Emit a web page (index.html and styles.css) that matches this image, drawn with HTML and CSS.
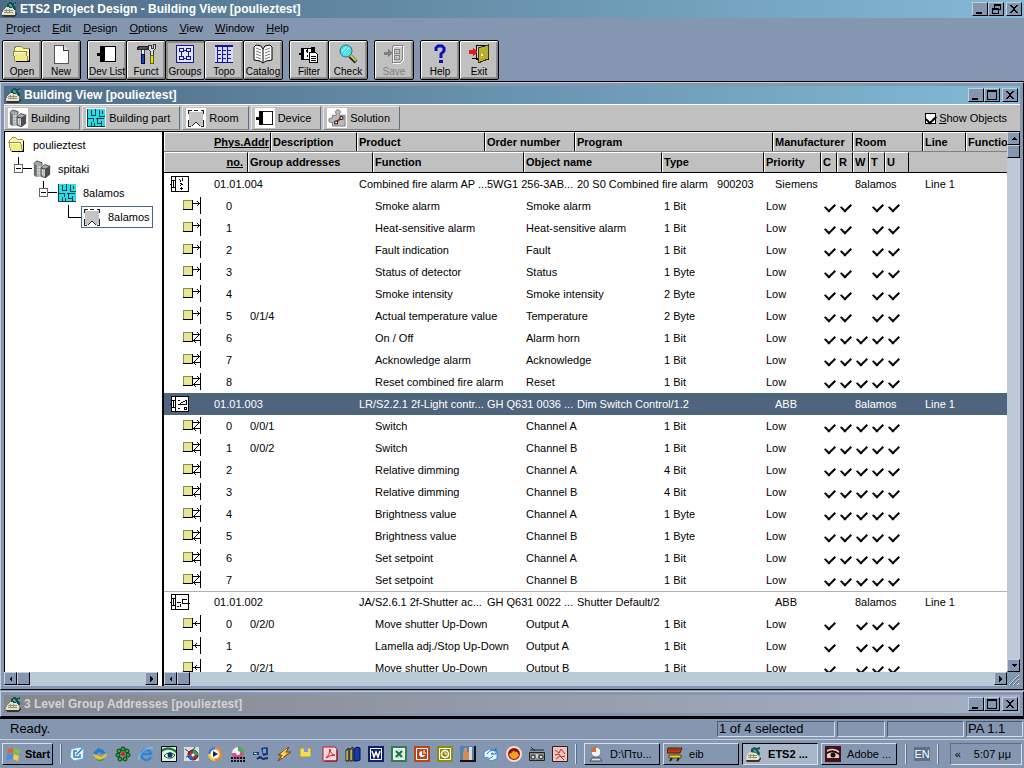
FILE: index.html
```html
<!DOCTYPE html>
<html lang="en">
<head>
    <meta charset="UTF-8">
    <meta name="viewport" content="width=device-width, initial-scale=1.0">
    <title>ETS2 Project Design - Building View [poulieztest]</title>
    <link rel="stylesheet" href="styles.css">
</head>
<body>
    <!-- Icon set -->
    <svg class="sprite" aria-hidden="true">
        <symbol id="i-app" viewBox="0 0 16 16">
            <path d="M5 3l3-2 3 1 3-1v2l-2 1 2 3-1 4-4-3-4 1z" fill="#164f57"/>
            <path d="M7 3l3 1 1 3-3-1zM12 3h2v1h-2z" fill="#43a19a"/>
            <path d="M1 9l3-3 6 1 3 3v4l-2 1H1l-1-2z" fill="#e8e2c4"/>
            <path d="M2 9.500h9M2 11.500h9M4.500 8v4M7.500 8v4" stroke="#8f907f" fill="none"/>
            <path d="M0 14h12l3-3v2l-2 3H1z" fill="#37352a"/>
        </symbol>
        <symbol id="i-folder" viewBox="0 0 20 18">
            <path d="M2 4l2-3h5l2 2h6v12H4z" fill="#fbf7a0" stroke="#8b8b45"/>
            <path d="M1 6h13l2 10H3z" fill="#f0ec88" stroke="#8b8b45"/>
            <path d="M17 4h1v13H4v-1h13z" fill="#000"/>
            <path d="M2 7h11" stroke="#fff"/>
        </symbol>
        <symbol id="i-page" viewBox="0 0 20 20">
            <path d="M3 1h9l5 5v13H3z" fill="#fff" stroke="#555"/>
            <path d="M12 1v5h5" fill="#ddd" stroke="#333"/>
        </symbol>
        <symbol id="i-device" viewBox="0 0 20 20">
            <path d="M3.500 2.500h15v15h-15z" fill="#fff" stroke="#000"/>
            <path d="M3 2h5v16H3zM0 9h3v3H0z" fill="#000"/>
        </symbol>
        <symbol id="i-tools" viewBox="0 0 20 20">
            <path d="M5 5h3v6H5z" fill="#e8e8e8" stroke="#444"/>
            <path d="M1 4l3-2h7v3H4L2 6z" fill="#555" stroke="#222"/>
            <path d="M12 1v4l2 2v4h3V7l2-2V0l-2 1v3h-2V1z" fill="#ddd" stroke="#333"/>
            <path d="M5 10h3v9H5z" fill="#1048c0" stroke="#003"/>
            <path d="M14 11h3v8h-3z" fill="#f0d820" stroke="#660"/>
        </symbol>
        <symbol id="i-groups" viewBox="0 0 20 20">
            <path d="M1.500 1.500h17v17h-17z" fill="#e4e6fa" stroke="#1414a0"/>
            <path d="M4.500 4.500h4v3h-4zM11.500 4.500h4v3h-4zM4.500 12.500h4v3h-4zM11.500 12.500h4v3h-4zM8 6.500h3M8 14.500h3M6.500 8v4M13.500 8v4" fill="none" stroke="#1414a0"/>
        </symbol>
        <symbol id="i-topo" viewBox="0 0 20 20">
            <path d="M1 1h18v18H1z" fill="#d8dbf6"/>
            <path d="M1 1h18v2H1z" fill="#1414a0"/>
            <path d="M3.500 2v16M8.500 2v16M13.500 2v16M1 18.500h18M4 6.500h3M4 10.500h3M4 14.500h3M9 6.500h3M9 10.500h3M9 14.500h3M14 6.500h3M14 10.500h3M14 14.500h3" stroke="#1414a0"/>
        </symbol>
        <symbol id="i-book" viewBox="0 0 20 20">
            <path d="M1 3l2-2 5 1 2 3 2-3 5-1 2 2v13l-6 1-3 2-3-2-6-1z" fill="#fff" stroke="#000"/>
            <path d="M10 5v13" stroke="#000"/>
            <path d="M3 4l5 2M3 7l5 2M3 10l5 2M3 13l5 2M17 4l-5 2M17 7l-5 2M17 10l-5 2M17 13l-5 2" stroke="#777" fill="none"/>
        </symbol>
        <symbol id="i-filter" viewBox="0 0 20 20">
            <path d="M2.500 4.500h12v11h-12z" fill="#fff" stroke="#000"/>
            <path d="M2 4h3v12H2zM0 9h2v2H0zM12 3h4v6h-4zM6 7l3-2v4zM7 12l2-2v4z" fill="#000"/>
            <path d="M10.500 8.500h6l2 2v8h-8z" fill="#fff" stroke="#000"/>
            <path d="M12 12.500h5M12 14.500h5M12 16.500h5" stroke="#000"/>
        </symbol>
        <symbol id="i-check-lens" viewBox="0 0 20 20">
            <path d="M12 12l6 6" stroke="#222" stroke-width="4"/>
            <path d="M12 11l6 6" stroke="#d8cf4a" stroke-width="2"/>
            <circle cx="8" cy="7" r="6" fill="#4de2ec" stroke="#27707a"/>
            <path d="M4 7l4-4M6 9l5-5" stroke="#c8fbff"/>
        </symbol>
        <symbol id="i-save" viewBox="0 0 20 20">
            <path d="M0 8h4V5l4 4-4 5v-3H0z" fill="#808080"/>
            <path d="M9 4l2-2h8v15l-2 2H9z" fill="#c8c8c8" stroke="#fff"/>
            <path d="M8 3l2-2h8v15l-2 2H8zM10 5h5v4h-5zM10 11h5v4h-5zM12 7h1M12 13h1" fill="none" stroke="#808080"/>
        </symbol>
        <symbol id="i-help" viewBox="0 0 20 20">
            <path d="M6 7V4l2-2h4l2 2v3l-3 3v4" fill="none" stroke="#1010b8" stroke-width="3"/>
            <path d="M9 16h4v3H9z" fill="#1010b8"/>
        </symbol>
        <symbol id="i-exit" viewBox="0 0 20 20">
            <path d="M7 1h12v14H7zM3 14h7" fill="#d8d8d8" stroke="#000"/>
            <path d="M9 4l10-3v14L9 19z" fill="#b9ad32" stroke="#3a3608"/>
            <path d="M12 10h2v2h-2z" fill="#fff59a"/>
            <path d="M0 6h4V3l4 5-4 5v-3H0z" fill="#e01820"/>
        </symbol>
        <symbol id="i-building" viewBox="0 0 20 20">
            <path d="M1 4l3-3 6 2v15l-6 1-3-2z" fill="#a4a8a8"/>
            <path d="M1 4l3 2v13l-3-2z" fill="#666b6b"/>
            <path d="M9 9l4-4 6 2v9l-5 4-5-2z" fill="#aaaeae"/>
            <path d="M14 10l5-3v9l-5 4z" fill="#4c5050"/>
            <path d="M1 4l3-3 6 2v3M9 9l4-4 6 2-5 3-5-1v9l5 2v-10" fill="none" stroke="#3c4040"/>
            <path d="M5.500 7v10M7.500 7v10M10.500 11v6M12.500 11v7" stroke="#f0f4f4" stroke-dasharray="2 1"/>
        </symbol>
        <symbol id="i-part" viewBox="0 0 18 18">
            <path d="M0 0h18v18H0z" fill="#28dce8"/>
            <path d="M.5 0v18M0 17.500h18M4.500 1v5h4M8.500 0v6M12.500 1v6h5M15.500 2v3M1 9.500h5v3M4.500 13v4M9 9.500h8M10.500 10v4h4M14.500 12v5M7.500 14v3" fill="none" stroke="#0b3a44"/>
        </symbol>
        <symbol id="i-room" viewBox="0 0 18 18">
            <path d="M2 2l2 1h10l2-1v13l-1 2h-2l-4-4-4 4H3l-1-3z" fill="#c4c4c4"/>
            <path d="M1.500 5V1.500h3M7 1.500h4M14 1.500h2.500V5M16.500 11v6H14M1.500 11v6H4M5 17l4-4 4 4" fill="none" stroke="#222"/>
        </symbol>
        <symbol id="i-puzzle" viewBox="0 0 20 20">
            <path d="M5 7h4V5L8 3l2-2h2l2 2-1 2v2h6v12H5v-4H3l-2-1v-3l2-1h2z" fill="#b8b8b8" stroke="#777"/>
            <path d="M8 15l7-5" stroke="#d01818" stroke-width="2"/>
            <path d="M7.500 13.500h3v3h-3zM13.500 8.500h3v3h-3z" fill="#fff" stroke="#000"/>
        </symbol>
        <symbol id="i-node" viewBox="0 0 25 24">
            <path d="M10.500 0v7M14 11.500h10" stroke="#000"/>
            <path d="M6.500 7.500h8v8h-8z" fill="#fff" stroke="#666"/>
            <path d="M8 11.500h5" stroke="#000"/>
        </symbol>
        <symbol id="i-leaf" viewBox="0 0 25 24"><path d="M10.500 0v12h13" fill="none" stroke="#000"/></symbol>
        <symbol id="i-unit" viewBox="0 0 20 16">
            <path d="M1.500 .5h17v15h-17z" fill="#fff" stroke="#000"/>
            <path d="M5.500 1v14M1 4.500h4M1 11.500h4M3.500 4v8M0 8.500h1" stroke="#000"/>
        </symbol>
        <symbol id="i-fire" viewBox="0 0 20 16">
            <use href="#i-unit"/>
            <path d="M9 3h1v1H9zM10 4h1v2h-1zM12 2h1v3h-1zM10 7h2v1h-2zM11 8h2v1h-2zM10 9h1v1h-1zM11 11h1v3h-1zM10 12h3v1h-3z"/>
        </symbol>
        <symbol id="i-dimmer" viewBox="0 0 20 16">
            <use href="#i-unit"/>
            <path d="M8 8.500h9M10 7.500l6-3v4M8 4.500h2M14.500 11.500h2v2h-2zM8 12.500h2" fill="none" stroke="#000"/>
        </symbol>
        <symbol id="i-shutter" viewBox="0 0 20 16">
            <use href="#i-unit"/>
            <path d="M13 5.500h4M12.500 5v5M12 9.500h8M7 8.500h4M7 12.500h2M10.500 10v3" fill="none" stroke="#000"/>
        </symbol>
        <symbol id="i-box" viewBox="0 0 18 18">
            <path d="M1 4h8v8H1z" fill="#e6e696"/>
            <path d="M.5 13V3.500H10" fill="none" stroke="#8c8c50"/>
            <path d="M0 12.500h9.500V3M17.500 0v17" fill="none" stroke="#000"/>
        </symbol>
        <symbol id="i-out" viewBox="0 0 18 18"><use href="#i-box"/><path d="M10 6.500h7M14 4h1v1h1v1h1v1h-1v1h-1v1h-1V8h1V5h-1z" fill="#000" stroke="none"/><path d="M10 6.500h7" stroke="#000"/></symbol>
        <symbol id="i-in" viewBox="0 0 18 18"><use href="#i-box"/><path d="M10 8.500h7" stroke="#000"/><path d="M13 6h1v1h-1v1h-1V7h1zM12 9h1v1h1v1h-1v-1h-1z"/></symbol>
        <symbol id="i-both" viewBox="0 0 18 18">
            <use href="#i-box"/>
            <path d="M10 5.500h7M10 11.500h7" stroke="#000"/>
            <path d="M14 3h1v1h1v1h-1V4h-1zM15 6h1v1h-1zM14 7h1v1h-1zM13 8h1v1h-1zM12 9h1v1h-1zM11 10h1v1h-1zM11 12h1v1h-1zM12 13h1v1h-1z"/>
        </symbol>
        <symbol id="i-min" viewBox="0 0 12 12"><path d="M2 9h6v2H2z"/></symbol>
        <symbol id="i-max" viewBox="0 0 12 12"><path d="M1 1h10v10H1zM2 3v7h8V3z" fill-rule="evenodd"/></symbol>
        <symbol id="i-restore" viewBox="0 0 12 12"><path d="M4 1h7v6H9v4H2V5h2zM5 3v2h4v1h1V3zM3 7v3h5V7z" fill-rule="evenodd"/></symbol>
        <symbol id="i-close" viewBox="0 0 12 12"><path d="M2 2h2v1h1v1h2V3h1V2h2v1H9v1H8v1H7v2h1v1h1v1h1v1H8V9H7V8H5v1H4v1H2V9h1V8h1V7h1V5H4V4H3V3H2z"/></symbol>
        <symbol id="i-left" viewBox="0 0 12 12"><path d="M7 3v6L4 6z"/></symbol>
        <symbol id="i-right" viewBox="0 0 12 12"><path d="M4 3v6l3-3z"/></symbol>
        <symbol id="i-up" viewBox="0 0 12 12"><path d="M3 7h6L6 4z"/></symbol>
        <symbol id="i-down" viewBox="0 0 12 12"><path d="M3 4h6L6 7z"/></symbol>
    </svg>

    <header class="titlebar">
        <svg class="app-icon"><use href="#i-app"/></svg>
        <h1>ETS2 Project Design - Building View [poulieztest]</h1>
        <div class="win-buttons">
            <button aria-label="Minimize"><svg><use href="#i-min"/></svg></button>
            <button aria-label="Restore"><svg><use href="#i-restore"/></svg></button>
            <button aria-label="Close"><svg><use href="#i-close"/></svg></button>
        </div>
    </header>

    <nav class="menu">
        <a href="#"><u>P</u>roject</a>
        <a href="#"><u>E</u>dit</a>
        <a href="#"><u>D</u>esign</a>
        <a href="#"><u>O</u>ptions</a>
        <a href="#"><u>V</u>iew</a>
        <a href="#"><u>W</u>indow</a>
        <a href="#"><u>H</u>elp</a>
    </nav>

    <div class="toolbar">
        <div class="tool-group">
            <button><svg><use href="#i-folder"/></svg>Open</button>
            <button><svg><use href="#i-page"/></svg>New</button>
        </div>
        <div class="tool-group">
            <button><svg><use href="#i-device"/></svg>Dev List</button>
            <button><svg><use href="#i-tools"/></svg>Funct</button>
            <button class="pressed"><svg><use href="#i-groups"/></svg>Groups</button>
            <button><svg><use href="#i-topo"/></svg>Topo</button>
            <button><svg class="smooth"><use href="#i-book"/></svg>Catalog</button>
        </div>
        <div class="tool-group">
            <button><svg><use href="#i-filter"/></svg>Filter</button>
            <button><svg class="smooth"><use href="#i-check-lens"/></svg>Check</button>
        </div>
        <div class="tool-group">
            <button disabled><svg><use href="#i-save"/></svg>Save</button>
        </div>
        <div class="tool-group">
            <button><svg class="smooth"><use href="#i-help"/></svg>Help</button>
            <button><svg><use href="#i-exit"/></svg>Exit</button>
        </div>
    </div>

    <main class="workspace">
        <section class="window main-window">
            <div class="titlebar">
                <svg class="app-icon"><use href="#i-app"/></svg>
                <h2>Building View [poulieztest]</h2>
                <div class="win-buttons">
                    <button aria-label="Minimize"><svg><use href="#i-min"/></svg></button>
                    <button aria-label="Maximize"><svg><use href="#i-max"/></svg></button>
                    <button aria-label="Close"><svg><use href="#i-close"/></svg></button>
                </div>
            </div>

            <div class="partbar">
                <button><svg class="smooth"><use href="#i-building"/></svg>Building</button>
                <button><svg><use href="#i-part"/></svg>Building part</button>
                <button><svg><use href="#i-room"/></svg>Room</button>
                <button><svg><use href="#i-device"/></svg>Device</button>
                <button><svg class="smooth"><use href="#i-puzzle"/></svg>Solution</button>
                <label class="show-objects"><input type="checkbox" checked><span><u>S</u>how Objects</span></label>
            </div>

            <div class="panes">
                <div class="tree-pane">
                    <ul class="tree">
                        <li><svg class="tree-icon"><use href="#i-folder"/></svg><span>poulieztest</span></li>
                        <li><svg class="branch"><use href="#i-node"/></svg><svg class="tree-icon smooth"><use href="#i-building"/></svg><span>spitaki</span></li>
                        <li class="level-2"><svg class="branch"><use href="#i-node"/></svg><svg class="tree-icon"><use href="#i-part"/></svg><span>8alamos</span></li>
                        <li class="level-3"><svg class="branch"><use href="#i-leaf"/></svg><div class="tree-selected"><svg class="tree-icon"><use href="#i-room"/></svg><span>8alamos</span></div></li>
                    </ul>
                    <div class="hscroll">
                        <button aria-label="Scroll left"><svg><use href="#i-left"/></svg></button>
                        <div class="thumb"></div>
                        <button class="end" aria-label="Scroll right"><svg><use href="#i-right"/></svg></button>
                    </div>
                </div>

                <div class="list-pane">
                    <div class="list-view">
                        <table>
                            <thead>
                                <tr class="device-row">
                                    <th class="phys"><u>Phys.Addr</u></th><th>Description</th><th>Product</th><th>Order number</th><th>Program</th><th>Manufacturer</th><th>Room</th><th>Line</th><th>Function</th>
                                </tr>
                                <tr class="object-row">
                                    <th class="num"><u>no.</u></th><th>Group addresses</th><th>Function</th><th>Object name</th><th>Type</th><th>Priority</th><th>C</th><th>R</th><th>W</th><th>T</th><th>U</th>
                                </tr>
                            </thead>
                            <tbody>
                                <tr class="device-row"><td class="id"><svg><use href="#i-fire"/></svg>01.01.004</td><td></td><td>Combined fire alarm AP ...</td><td>5WG1 256-3AB...</td><td>20 S0 Combined fire alarm   900203</td><td>Siemens</td><td>8alamos</td><td>Line 1</td><td></td></tr>
                                <tr class="object-row"><td class="id"><svg><use href="#i-out"/></svg>0</td><td></td><td>Smoke alarm</td><td>Smoke alarm</td><td>1 Bit</td><td>Low</td><td class="on"></td><td class="on"></td><td></td><td class="on"></td><td class="on"></td></tr>
                                <tr class="object-row"><td class="id"><svg><use href="#i-out"/></svg>1</td><td></td><td>Heat-sensitive alarm</td><td>Heat-sensitive alarm</td><td>1 Bit</td><td>Low</td><td class="on"></td><td class="on"></td><td></td><td class="on"></td><td class="on"></td></tr>
                                <tr class="object-row"><td class="id"><svg><use href="#i-out"/></svg>2</td><td></td><td>Fault indication</td><td>Fault</td><td>1 Bit</td><td>Low</td><td class="on"></td><td class="on"></td><td></td><td class="on"></td><td class="on"></td></tr>
                                <tr class="object-row"><td class="id"><svg><use href="#i-out"/></svg>3</td><td></td><td>Status of detector</td><td>Status</td><td>1 Byte</td><td>Low</td><td class="on"></td><td class="on"></td><td></td><td class="on"></td><td class="on"></td></tr>
                                <tr class="object-row"><td class="id"><svg><use href="#i-out"/></svg>4</td><td></td><td>Smoke intensity</td><td>Smoke intensity</td><td>2 Byte</td><td>Low</td><td class="on"></td><td class="on"></td><td></td><td class="on"></td><td class="on"></td></tr>
                                <tr class="object-row"><td class="id"><svg><use href="#i-out"/></svg>5</td><td>0/1/4</td><td>Actual temperature value</td><td>Temperature</td><td>2 Byte</td><td>Low</td><td class="on"></td><td class="on"></td><td></td><td class="on"></td><td class="on"></td></tr>
                                <tr class="object-row"><td class="id"><svg><use href="#i-both"/></svg>6</td><td></td><td>On / Off</td><td>Alarm horn</td><td>1 Bit</td><td>Low</td><td class="on"></td><td class="on"></td><td class="on"></td><td class="on"></td><td class="on"></td></tr>
                                <tr class="object-row"><td class="id"><svg><use href="#i-both"/></svg>7</td><td></td><td>Acknowledge alarm</td><td>Acknowledge</td><td>1 Bit</td><td>Low</td><td class="on"></td><td class="on"></td><td class="on"></td><td class="on"></td><td class="on"></td></tr>
                                <tr class="object-row"><td class="id"><svg><use href="#i-both"/></svg>8</td><td></td><td>Reset combined fire alarm</td><td>Reset</td><td>1 Bit</td><td>Low</td><td class="on"></td><td class="on"></td><td class="on"></td><td class="on"></td><td class="on"></td></tr>
                            </tbody>
                            <tbody>
                                <tr class="device-row selected"><td class="id"><svg><use href="#i-dimmer"/></svg>01.01.003</td><td></td><td>LR/S2.2.1 2f-Light contr...</td><td>GH Q631 0036 ...</td><td>Dim Switch Control/1.2</td><td>ABB</td><td>8alamos</td><td>Line 1</td><td></td></tr>
                                <tr class="object-row"><td class="id"><svg><use href="#i-both"/></svg>0</td><td>0/0/1</td><td>Switch</td><td>Channel A</td><td>1 Bit</td><td>Low</td><td class="on"></td><td class="on"></td><td class="on"></td><td class="on"></td><td class="on"></td></tr>
                                <tr class="object-row"><td class="id"><svg><use href="#i-both"/></svg>1</td><td>0/0/2</td><td>Switch</td><td>Channel B</td><td>1 Bit</td><td>Low</td><td class="on"></td><td class="on"></td><td class="on"></td><td class="on"></td><td class="on"></td></tr>
                                <tr class="object-row"><td class="id"><svg><use href="#i-both"/></svg>2</td><td></td><td>Relative dimming</td><td>Channel A</td><td>4 Bit</td><td>Low</td><td class="on"></td><td class="on"></td><td class="on"></td><td class="on"></td><td class="on"></td></tr>
                                <tr class="object-row"><td class="id"><svg><use href="#i-both"/></svg>3</td><td></td><td>Relative dimming</td><td>Channel B</td><td>4 Bit</td><td>Low</td><td class="on"></td><td class="on"></td><td class="on"></td><td class="on"></td><td class="on"></td></tr>
                                <tr class="object-row"><td class="id"><svg><use href="#i-both"/></svg>4</td><td></td><td>Brightness value</td><td>Channel A</td><td>1 Byte</td><td>Low</td><td class="on"></td><td class="on"></td><td class="on"></td><td class="on"></td><td class="on"></td></tr>
                                <tr class="object-row"><td class="id"><svg><use href="#i-both"/></svg>5</td><td></td><td>Brightness value</td><td>Channel B</td><td>1 Byte</td><td>Low</td><td class="on"></td><td class="on"></td><td class="on"></td><td class="on"></td><td class="on"></td></tr>
                                <tr class="object-row"><td class="id"><svg><use href="#i-both"/></svg>6</td><td></td><td>Set setpoint</td><td>Channel A</td><td>1 Bit</td><td>Low</td><td class="on"></td><td class="on"></td><td class="on"></td><td class="on"></td><td class="on"></td></tr>
                                <tr class="object-row"><td class="id"><svg><use href="#i-both"/></svg>7</td><td></td><td>Set setpoint</td><td>Channel B</td><td>1 Bit</td><td>Low</td><td class="on"></td><td class="on"></td><td class="on"></td><td class="on"></td><td class="on"></td></tr>
                            </tbody>
                            <tbody>
                                <tr class="device-row divided"><td class="id"><svg><use href="#i-shutter"/></svg>01.01.002</td><td></td><td>JA/S2.6.1 2f-Shutter ac...</td><td>GH Q631 0022 ...</td><td>Shutter Default/2</td><td>ABB</td><td>8alamos</td><td>Line 1</td><td></td></tr>
                                <tr class="object-row"><td class="id"><svg><use href="#i-in"/></svg>0</td><td>0/2/0</td><td>Move shutter Up-Down</td><td>Output A</td><td>1 Bit</td><td>Low</td><td class="on"></td><td></td><td class="on"></td><td class="on"></td><td class="on"></td></tr>
                                <tr class="object-row"><td class="id"><svg><use href="#i-in"/></svg>1</td><td></td><td>Lamella adj./Stop Up-Down</td><td>Output A</td><td>1 Bit</td><td>Low</td><td class="on"></td><td></td><td class="on"></td><td class="on"></td><td class="on"></td></tr>
                                <tr class="object-row"><td class="id"><svg><use href="#i-in"/></svg>2</td><td>0/2/1</td><td>Move shutter Up-Down</td><td>Output B</td><td>1 Bit</td><td>Low</td><td class="on"></td><td></td><td class="on"></td><td class="on"></td><td class="on"></td></tr>
                            </tbody>
                        </table>
                    </div>
                    <div class="vscroll">
                        <button aria-label="Scroll up"><svg><use href="#i-up"/></svg></button>
                        <div class="thumb"></div>
                        <button class="end" aria-label="Scroll down"><svg><use href="#i-down"/></svg></button>
                    </div>
                    <div class="hscroll">
                        <button aria-label="Scroll left"><svg><use href="#i-left"/></svg></button>
                        <div class="thumb"></div>
                        <button class="end" aria-label="Scroll right"><svg><use href="#i-right"/></svg></button>
                    </div>
                    <svg class="grip" viewBox="0 0 13 14"><path d="M2 13L12 3M6 13l6-6M10 13l2-2" stroke="#d5dfea"/><path d="M3 13l9-9M7 13l5-5" stroke="#4d5c70"/></svg>
                </div>
            </div>
        </section>

        <section class="window inactive">
            <div class="titlebar">
                <svg class="app-icon"><use href="#i-app"/></svg>
                <h2>3 Level Group Addresses [poulieztest]</h2>
                <div class="win-buttons">
                    <button aria-label="Minimize"><svg><use href="#i-min"/></svg></button>
                    <button aria-label="Maximize"><svg><use href="#i-max"/></svg></button>
                    <button aria-label="Close"><svg><use href="#i-close"/></svg></button>
                </div>
            </div>
        </section>
    </main>

    <div class="statusbar">
        <span class="ready">Ready.</span>
        <span class="cell">1 of 4 selected</span>
        <span class="cell"></span>
        <span class="cell"></span>
        <span class="cell">PA 1.1</span>
    </div>

    <footer class="taskbar">
        <button class="start">
            <svg viewBox="0 0 16 16"><path d="M2 3l5-1v5H1z" fill="#e2632c"/><path d="M8 2l6 2-1 5-5-2z" fill="#7fc243"/><path d="M1 8h6l-1 5-6 1z" fill="#4a8fe0"/><path d="M8 8l5 2-1 5-5-2z" fill="#f6cf3c"/></svg>
            Start
        </button>
        <div class="divider"></div>
        <div class="quick-launch">
            <a href="#" aria-label="Show desktop"><svg viewBox="0 0 16 16"><path d="M2 3l9-2 4 3-1 9-9 2-4-4z" fill="#e8f3fb" stroke="#5fa6d2"/><path d="M11 8v3H5V5h3M7 9l6-6" fill="none" stroke="#2c7cb8" stroke-width="1.500"/></svg></a>
            <a href="#" aria-label="Messages"><svg viewBox="0 0 16 16"><path d="M1 7l5-5 5 2 3 3-4 1-3-2-3 3z" fill="#1f7fd0"/><path d="M1 8l4 1 4 2 6-4-1 4-5 3-5-1z" fill="#e8c42a"/><path d="M3 12l4 2 6-2-3 3H6z" fill="#3e9c3c"/></svg></a>
            <a href="#" aria-label="ICQ"><svg viewBox="0 0 16 16"><g fill="#2cae34" stroke="#063f0a"><circle cx="8" cy="3" r="2"/><circle cx="12" cy="5" r="2"/><circle cx="13" cy="9" r="2"/><circle cx="10" cy="13" r="2"/><circle cx="5" cy="13" r="2"/><circle cx="3" cy="9" r="2"/><circle cx="4" cy="5" r="2"/></g><circle cx="8" cy="8" r="2" fill="#d42020"/></svg></a>
            <a href="#" aria-label="Internet Explorer"><svg viewBox="0 0 16 16"><path d="M13 11a5 5 0 1 1 0-4v1H5" fill="none" stroke="#2a87d8" stroke-width="2.500"/><path d="M1 14C-1 9 9 0 15 2" fill="none" stroke="#8fd0f8"/></svg></a>
            <a href="#" aria-label="Image viewer"><svg viewBox="0 0 16 16"><path d="M.5 .5h15v15H.5z" fill="#dff0e4" stroke="#000"/><path d="M1 3q7-4 14 1v3Q8 1 1 6z" fill="#1b7a3a"/><path d="M3 10q5-6 11-1-4 6-11 1z" fill="#fff" stroke="#053"/><circle cx="9" cy="9" r="2.500" fill="#12306a"/></svg></a>
            <a href="#" aria-label="Colour tool"><svg viewBox="0 0 16 16"><path d="M0 1h15v14H0z" fill="#ddd"/><path d="M1 3l4 3M11 1L9 4M2 11l3-1" stroke="#444"/><circle cx="9" cy="9" r="5" fill="#c22" stroke="#222"/><path d="M9 4a5 5 0 0 1 5 5H9z" fill="#2a5"/><path d="M9 14a5 5 0 0 1-5-5h5z" fill="#26c"/><circle cx="9" cy="9" r="1.500" fill="#fff"/></svg></a>
            <a href="#" aria-label="Media player"><svg viewBox="0 0 16 16"><circle cx="8" cy="8" r="7" fill="#f08a22"/><path d="M8 1a7 7 0 0 0-7 7h7z" fill="#3b7ddb"/><path d="M1 8a7 7 0 0 0 7 7V8z" fill="#f2cf3a"/><circle cx="8" cy="8" r="4.500" fill="#fff"/><path d="M6 5l5 3-5 3z" fill="#223"/></svg></a>
            <a href="#" aria-label="Media centre"><svg viewBox="0 0 16 16"><circle cx="8" cy="7" r="6" fill="#d84c80"/><path d="M8 1a6 6 0 0 1 6 6H8z" fill="#48b04a"/><path d="M2 7a6 6 0 0 1 6-6v6z" fill="#eee"/><circle cx="8" cy="7" r="2" fill="#fff"/><path d="M1 12h14M1 15h14" stroke="#111" stroke-width="2" stroke-dasharray="2 1"/></svg></a>
            <a href="#" aria-label="Network"><svg viewBox="0 0 16 16"><path d="M8 2l6-1 1 1v7l-5 1zM0 6h6v3H0z" fill="#223c80"/><path d="M10 3h3v4h-3z" fill="#68a8d8"/><path d="M1 7l3 1" stroke="#dfe"/><path d="M4 13l3-2 3 2 5-1" fill="none" stroke="#112a60" stroke-width="2"/></svg></a>
            <a href="#" aria-label="Winamp"><svg viewBox="0 0 16 16"><path d="M13 1L2 9h4l-4 6L15 6h-5z" fill="#fbb62c" stroke="#7a3e0a"/><path d="M11 3L5 8h4l-3 4" fill="none" stroke="#fff2a0"/></svg></a>
            <a href="#" aria-label="WinZip"><svg viewBox="0 0 16 16"><path d="M1 2h11v9H1z" fill="#f3dc5c" stroke="#a89434"/><path d="M5 1h4v5H5z" fill="#8893d4"/><path d="M5 13h9M14 5v9" stroke="#6f98e0" stroke-width="2" fill="none"/></svg></a>
            <a href="#" aria-label="Acrobat"><svg viewBox="0 0 16 16"><path d="M1 1h12l2 2v12H1z" fill="#f7d9dc" stroke="#b01c2c"/><path d="M4 12q4-3 4-9 1 6 5 6-5 0-9 3z" fill="none" stroke="#d01828"/><path d="M15 4v11H3" fill="none" stroke="#801020"/></svg></a>
            <a href="#" aria-label="Library"><svg viewBox="0 0 16 16"><path d="M1 4l3-2v13H1zM5 3l3-2v14H5z" fill="#80802c" stroke="#222"/><path d="M9 3l3-2 3 1v12l-3 1H9z" fill="#1838b0" stroke="#001050"/><path d="M6 4v10M2 5v9" stroke="#e0d878"/></svg></a>
            <a href="#" aria-label="Word"><svg viewBox="0 0 16 16"><path d="M0 0h16v16H0z" fill="#10206c"/><path d="M2.500 2.500h11v11h-11z" fill="none" stroke="#fff"/><path d="M4 5l2 6 2-5 2 5 2-6" fill="none" stroke="#fff" stroke-width="1.500"/></svg></a>
            <a href="#" aria-label="Excel"><svg viewBox="0 0 16 16"><path d="M0 0h16v16H0z" fill="#2c8048"/><path d="M2.500 2.500h11v11h-11z" fill="#d6ecdc" stroke="#fff"/><path d="M5 5l6 6M11 5l-6 6" stroke="#1c7038" stroke-width="2"/></svg></a>
            <a href="#" aria-label="PowerPoint"><svg viewBox="0 0 16 16"><path d="M0 0h16v16H0z" fill="#b8481c"/><path d="M2.500 2.500h11v11h-11z" fill="none" stroke="#fff"/><path d="M8 5a3 3 0 1 0 3 4H8z" fill="#fff"/><path d="M9 5h2M9 7h3" stroke="#fff"/></svg></a>
            <a href="#" aria-label="Outlook"><svg viewBox="0 0 16 16"><path d="M0 0h16v16H0z" fill="#908c10"/><path d="M2.500 2.500h11v11h-11z" fill="none" stroke="#fff"/><circle cx="8" cy="8" r="3.500" fill="none" stroke="#fff" stroke-width="1.500"/><path d="M8 6v2h2" fill="none" stroke="#fff"/></svg></a>
            <a href="#" aria-label="Archive"><svg viewBox="0 0 16 16"><path d="M0 0h15v15H0z" fill="#4f84b8"/><path d="M4 2h3v4h2v9H3V7z" fill="#d88c54"/><path d="M9 1h3v13H9z" fill="#dcdcd4"/><path d="M15 0v15H0" stroke="#111" stroke-width="2" fill="none"/></svg></a>
            <a href="#" aria-label="Outlook Express"><svg viewBox="0 0 16 16"><path d="M1 6l5-3 8 2v8l-6 2-7-4z" fill="#e6f3fc" stroke="#3d8ccc"/><path d="M4 8q3-5 8-3l1-3v6H8l2-1M3 11q4 3 7-1" fill="none" stroke="#2474c4"/></svg></a>
            <a href="#" aria-label="Nero"><svg viewBox="0 0 16 16"><circle cx="8" cy="8" r="7" fill="#8c1410" stroke="#f6dcd4" stroke-width="2"/><path d="M3 9q1-3 3-2 1-4 3-1 2-2 4 3-2 4-5 4t-5-4z" fill="#f4a024"/></svg></a>
            <a href="#" aria-label="Radio"><svg viewBox="0 0 16 16"><path d="M2 1l4 4M1 4h14" stroke="#222"/><path d="M.5 6.500h15v8H.5z" fill="#8c8c86" stroke="#222"/><circle cx="4" cy="11" r="2" fill="#ddd" stroke="#222"/><circle cx="12" cy="11" r="2" fill="#ddd" stroke="#222"/><path d="M7 8h2v4H7z" fill="#ccc"/></svg></a>
            <a href="#" aria-label="Matlab"><svg viewBox="0 0 16 16"><path d="M.5 .5h15v15H.5z" fill="#e8c8c4" stroke="#401818"/><path d="M3 4l4 3 2-4 4 5M3 9l4-1 2 3 4-1M4 13l4-3 4 4" fill="none" stroke="#c02c28"/></svg></a>
        </div>
        <div class="divider"></div>
        <div class="tasks">
            <button><svg viewBox="0 0 16 16"><path d="M4 12h8l2 3H2z" fill="#d4e4f0" stroke="#445"/><circle cx="8" cy="6" r="5" fill="#f2f2f2" stroke="#777"/><path d="M3 6a5 5 0 0 1 5-5v5z" fill="#e06a3c"/></svg><span>D:\Πτυ...</span></button>
            <button><svg viewBox="0 0 16 16"><path d="M1 2h14l-2 5H0z" fill="#d83018" stroke="#420"/><path d="M2 4h10M2 9h12v3H2z" fill="#f2d22c" stroke="#5c4408"/><path d="M3 15l2-3M10 15l2-3" stroke="#222" stroke-width="2"/></svg><span>eib</span></button>
            <button class="active"><svg><use href="#i-app"/></svg><span>ETS2 ...</span></button>
            <button><svg viewBox="0 0 16 16"><path d="M0 0h16v16H0z" fill="#4c1018"/><path d="M2 4q6-3 12 1v7H2z" fill="#e9cdc2"/><path d="M2 6q6-4 12 1v2Q8 4 2 8z" fill="#1c0c0c"/><circle cx="8" cy="9" r="2.500" fill="#111"/></svg><span>Adobe ...</span></button>
        </div>
        <div class="divider"></div>
        <span class="lang">EN</span>
        <div class="divider"></div>
        <div class="tray"><span>«</span><span>5:07 μμ</span></div>
    </footer>
</body>
</html>
```

FILE: styles.css
```css
* {
    box-sizing: border-box;
}
body {
    display: flex;
    flex-direction: column;
    height: 100vh;
    margin: 0;
    overflow: hidden;
    background-color: #8597b0;
    color: #000;
    font-family: "Liberation Sans", Arial, sans-serif;
    font-size: 11px;
}
.sprite {
    display: none;
}
svg {
    flex: none;
    shape-rendering: crispEdges;
}
.smooth {
    shape-rendering: auto;
}
button {
    margin: 0;
    padding: 0;
    color: #000;
    font-family: inherit;
    font-size: 11px;
}
a {
    color: #000;
    text-decoration: none;
}

/* Title bars */
.titlebar {
    display: flex;
    flex: none;
    align-items: center;
    height: 18px;
    padding: 0 2px;
    background: linear-gradient(to right, #4f6c86, #83bad6);
}
.titlebar h1,
.titlebar h2 {
    flex: 1;
    margin: 0 0 0 2px;
    color: #fff;
    font-size: 12px;
    white-space: nowrap;
}
.app-icon {
    width: 16px;
    height: 16px;
}
.win-buttons {
    display: flex;
}
.win-buttons button {
    display: flex;
    align-items: center;
    justify-content: center;
    width: 16px;
    height: 14px;
    border: 1px solid;
    border-color: #c3cfdd #000 #000 #c3cfdd;
    background-color: #8597b0;
}
.win-buttons button:last-child {
    margin-left: 2px;
}
.win-buttons svg {
    width: 12px;
    height: 12px;
}

/* Menu and main toolbar */
.menu {
    display: flex;
    flex: none;
    align-items: center;
    gap: 12px;
    height: 20px;
    padding: 0 6px;
}
.toolbar {
    display: flex;
    flex: none;
    gap: 6px;
    padding: 2px 2px 1px;
    border-bottom: 1px solid #000;
}
.tool-group {
    display: flex;
    padding-right: 1px;
}
.tool-group button {
    display: flex;
    flex-direction: column;
    align-items: center;
    justify-content: space-between;
    width: 40px;
    height: 40px;
    margin-right: -1px;
    padding: 3px 0 2px;
    border: 1px solid #000;
    border-radius: 2px;
    background-color: #c0c0c0;
    box-shadow: inset 1px 1px #fff, inset -1px -1px #808080, inset -2px -2px #909090;
    font-size: 10px;
    line-height: 11px;
    white-space: nowrap;
}
.tool-group button.pressed {
    background-color: #b8b8b8;
    box-shadow: inset 2px 2px #8c8c8c;
}
.tool-group button:disabled {
    color: #808080;
}
.tool-group svg {
    width: 20px;
    height: 20px;
}

/* Child windows */
.workspace {
    display: flex;
    flex: 1;
    flex-direction: column;
    gap: 1px;
    min-height: 0;
    border-bottom: 2px solid #000;
}
.window {
    padding: 3px;
    border: 1px solid;
    border-color: #c3cfdd #000 #000 #c3cfdd;
}
.main-window {
    display: flex;
    flex: 1;
    flex-direction: column;
    min-height: 0;
}
.inactive .titlebar {
    background: linear-gradient(to right, #85878d, #a4b0c6);
}
.inactive h2 {
    color: #d0d4da;
}
.partbar {
    display: flex;
    flex: none;
    align-items: center;
    gap: 2px;
    height: 28px;
    border-top: 1px solid #fff;
    border-bottom: 1px solid #000;
    background-color: #c0c0c0;
}
.partbar button {
    display: flex;
    align-items: center;
    gap: 3px;
    height: 24px;
    padding: 0 9px 0 3px;
    border: 1px solid;
    border-color: #e6e6e6 #5d7186 #808080 #e6e6e6;
    background-color: #c0c0c0;
}
.partbar svg {
    width: 20px;
    height: 20px;
    padding: 1px;
    background-color: #fff;
}
.show-objects {
    display: flex;
    align-items: center;
    gap: 3px;
    margin-left: auto;
    padding-right: 13px;
}
.show-objects input {
    appearance: none;
    display: grid;
    place-items: center;
    width: 11px;
    height: 11px;
    margin: 0;
    border: 1px solid #000;
    background-color: #fff;
}
.show-objects input:checked::before,
.on::before {
    content: "";
    width: 8px;
    height: 5px;
    border: solid #000;
    border-width: 0 0 2px 2px;
    transform: rotate(-45deg);
}
.panes {
    display: flex;
    flex: 1;
    min-height: 0;
    background-color: #fff;
}

/* Tree */
.tree-pane {
    display: flex;
    flex: none;
    flex-direction: column;
    width: 154px;
}
.tree {
    flex: 1;
    margin: 0;
    padding: 1px 0 0 3px;
    border-left: 1px solid #000;
    list-style: none;
}
.tree li {
    display: flex;
    align-items: center;
    height: 24px;
}
.tree span {
    padding-left: 7px;
}
.level-2 {
    padding-left: 25px;
}
.level-3 {
    padding-left: 50px;
}
.branch {
    width: 25px;
    height: 24px;
}
.tree-icon {
    width: 18px;
    height: 18px;
}
.tree-selected {
    display: flex;
    align-items: center;
    height: 22px;
    margin-left: -2px;
    padding: 0 2px 0 1px;
    border: 1px solid #4f657d;
}

/* Device list */
.list-pane {
    display: grid;
    flex: 1;
    grid-template-columns: minmax(0, 1fr) 13px;
    grid-template-rows: minmax(0, 1fr) 14px;
    min-width: 0;
    margin-left: 4px;
    border-left: 2px solid #000;
    background-color: #8597b0;
}
.list-view {
    overflow: hidden;
    background-color: #fff;
}
table,
thead,
tbody {
    display: block;
}
thead {
    border-bottom: 1px solid #000;
    background-color: #c0c0c0;
}
.device-row,
.object-row {
    display: grid;
    height: 22px;
}
.device-row {
    grid-template-columns: 107px 86px 128px 90px 198px 80px 70px 43px 1fr;
}
.object-row {
    grid-template-columns: 84px 125px 151px 138px 102px 57px 16px 16px 16px 16px 24px;
}
thead tr.device-row,
thead tr.object-row {
    height: 20px;
}
thead .device-row {
    border-bottom: 1px solid #808080;
}
th {
    overflow: hidden;
    padding: 0 0 0 1px;
    border: solid #fff;
    border-width: 1px 0 0 1px;
    border-right: 1px solid #000;
    line-height: 18px;
    text-align: left;
    white-space: nowrap;
}
th.phys {
    padding-left: 49px;
}
th.num {
    padding-right: 4px;
    text-align: right;
}
thead .device-row th:last-child {
    border-right: 0;
}
td {
    display: flex;
    align-items: center;
    padding: 0 0 0 2px;
    white-space: pre;
}
td.id {
    gap: 24px;
}
.device-row .id {
    padding-left: 6px;
}
.device-row .id svg {
    width: 20px;
    height: 16px;
}
.object-row .id {
    padding-left: 19px;
    gap: 25px;
}
.object-row .id svg {
    width: 18px;
    height: 18px;
}
.on {
    padding-left: 4px;
}
.selected {
    background-color: #4f657d;
    color: #fff;
}
.divided {
    box-shadow: inset 0 1px #b0b0b0;
}

/* Scroll bars */
.hscroll,
.vscroll {
    display: flex;
    background-color: #bccad8;
}
.hscroll {
    height: 14px;
}
.vscroll {
    flex-direction: column;
}
.hscroll button,
.vscroll button,
.thumb {
    display: flex;
    flex: none;
    align-items: center;
    justify-content: center;
    width: 13px;
    height: 13px;
    border: 1px solid;
    border-color: #c3cfdd #000 #000 #c3cfdd;
    background-color: #8597b0;
}
.hscroll .end {
    margin-left: auto;
}
.vscroll .end {
    margin-top: auto;
}
.hscroll svg,
.vscroll svg {
    width: 12px;
    height: 12px;
}
.grip {
    width: 13px;
    height: 14px;
}

/* Status bar */
.statusbar {
    display: grid;
    flex: none;
    grid-template-columns: 1fr 118px 48px 77px 57px;
    gap: 2px;
    height: 20px;
    padding: 2px 1px;
    font-size: 13px;
    line-height: 15px;
}
.ready {
    padding-left: 9px;
}
.cell {
    padding-left: 1px;
    border: 1px solid;
    border-color: #4d5c70 #d5dfea #d5dfea #4d5c70;
    line-height: 14px;
}

/* Task bar */
.taskbar {
    display: flex;
    flex: none;
    align-items: center;
    gap: 7px;
    height: 29px;
    padding: 0 2px;
    border-top: 1px solid #c3cfdd;
}
.taskbar svg {
    width: 16px;
    height: 16px;
    shape-rendering: auto;
}
.start,
.tasks button {
    display: flex;
    align-items: center;
    gap: 3px;
    height: 22px;
    padding: 0 2px 0 3px;
    border: 1px solid;
    border-color: #d5dfea #000 #000 #d5dfea;
    background-color: #8597b0;
    white-space: nowrap;
}
.start {
    font-weight: bold;
}
.divider {
    width: 2px;
    height: 20px;
    border-left: 1px solid #d5dfea;
    border-right: 1px solid #5c6c82;
}
.quick-launch {
    display: flex;
    gap: 7px;
}
.quick-launch a {
    display: flex;
}
.tasks {
    display: flex;
    flex: 1;
    gap: 3px;
}
.tasks button {
    flex: 0 1 76px;
    gap: 6px;
}
.tasks .active {
    border-color: #000 #d5dfea #d5dfea #000;
    background-color: #a8b6c8;
    font-weight: bold;
}
.lang {
    padding: 1px 0;
    background-color: #5a6f88;
    color: #fff;
}
.tray {
    display: flex;
    align-items: center;
    gap: 13px;
    height: 22px;
    margin-left: 4px;
    padding: 0 10px 0 4px;
    border: 1px solid;
    border-color: #5c6c82 #d5dfea #d5dfea #5c6c82;
}
```
